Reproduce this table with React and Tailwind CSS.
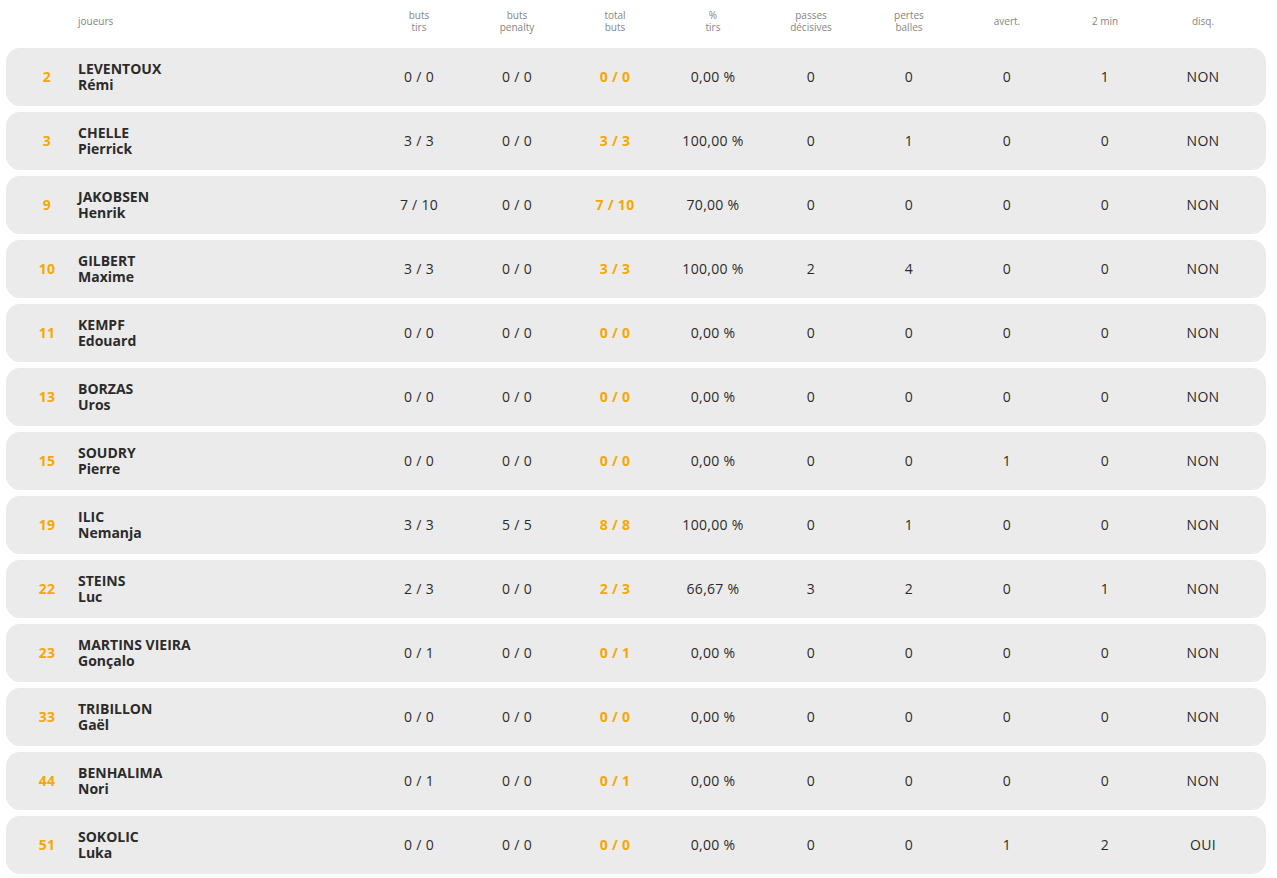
const players = [
  { n: 2, last: 'LEVENTOUX', first: 'Rémi', tirs: '0 / 0', pen: '0 / 0', tot: '0 / 0', pct: '0,00 %', pd: 0, pb: 0, av: 0, dm: 1, dq: 'NON' },
  { n: 3, last: 'CHELLE', first: 'Pierrick', tirs: '3 / 3', pen: '0 / 0', tot: '3 / 3', pct: '100,00 %', pd: 0, pb: 1, av: 0, dm: 0, dq: 'NON' },
  { n: 9, last: 'JAKOBSEN', first: 'Henrik', tirs: '7 / 10', pen: '0 / 0', tot: '7 / 10', pct: '70,00 %', pd: 0, pb: 0, av: 0, dm: 0, dq: 'NON' },
  { n: 10, last: 'GILBERT', first: 'Maxime', tirs: '3 / 3', pen: '0 / 0', tot: '3 / 3', pct: '100,00 %', pd: 2, pb: 4, av: 0, dm: 0, dq: 'NON' },
  { n: 11, last: 'KEMPF', first: 'Edouard', tirs: '0 / 0', pen: '0 / 0', tot: '0 / 0', pct: '0,00 %', pd: 0, pb: 0, av: 0, dm: 0, dq: 'NON' },
  { n: 13, last: 'BORZAS', first: 'Uros', tirs: '0 / 0', pen: '0 / 0', tot: '0 / 0', pct: '0,00 %', pd: 0, pb: 0, av: 0, dm: 0, dq: 'NON' },
  { n: 15, last: 'SOUDRY', first: 'Pierre', tirs: '0 / 0', pen: '0 / 0', tot: '0 / 0', pct: '0,00 %', pd: 0, pb: 0, av: 1, dm: 0, dq: 'NON' },
  { n: 19, last: 'ILIC', first: 'Nemanja', tirs: '3 / 3', pen: '5 / 5', tot: '8 / 8', pct: '100,00 %', pd: 0, pb: 1, av: 0, dm: 0, dq: 'NON' },
  { n: 22, last: 'STEINS', first: 'Luc', tirs: '2 / 3', pen: '0 / 0', tot: '2 / 3', pct: '66,67 %', pd: 3, pb: 2, av: 0, dm: 1, dq: 'NON' },
  { n: 23, last: 'MARTINS VIEIRA', first: 'Gonçalo', tirs: '0 / 1', pen: '0 / 0', tot: '0 / 1', pct: '0,00 %', pd: 0, pb: 0, av: 0, dm: 0, dq: 'NON' },
  { n: 33, last: 'TRIBILLON', first: 'Gaël', tirs: '0 / 0', pen: '0 / 0', tot: '0 / 0', pct: '0,00 %', pd: 0, pb: 0, av: 0, dm: 0, dq: 'NON' },
  { n: 44, last: 'BENHALIMA', first: 'Nori', tirs: '0 / 1', pen: '0 / 0', tot: '0 / 1', pct: '0,00 %', pd: 0, pb: 0, av: 0, dm: 0, dq: 'NON' },
  { n: 51, last: 'SOKOLIC', first: 'Luka', tirs: '0 / 0', pen: '0 / 0', tot: '0 / 0', pct: '0,00 %', pd: 0, pb: 0, av: 1, dm: 2, dq: 'OUI' },
];

const headers = [
  ['buts', 'tirs'],
  ['buts', 'penalty'],
  ['total', 'buts'],
  ['%', 'tirs'],
  ['passes', 'décisives'],
  ['pertes', 'balles'],
  ['avert.'],
  ['2 min'],
  ['disq.'],
];

const grid = 'grid grid-cols-[62px_1fr_repeat(9,98px)] items-center pl-[10px] pr-[14px]';

export default function App() {
  return (
    <div className="bg-white min-h-screen font-['Open_Sans',sans-serif] text-[#2b2b2b]">
      <div className="ml-[6px] w-[1260px] flex flex-col gap-[6px]">
        <div className={`${grid} h-[42px] text-[10px] leading-[12px] text-[#858585]`}>
          <div />
          <div>joueurs</div>
          {headers.map((h, i) => (
            <div key={i} className="text-center">
              {h.map((l) => (
                <div key={l}>{l}</div>
              ))}
            </div>
          ))}
        </div>

        {players.map((p) => (
          <div key={p.n} className={`${grid} h-[58px] bg-[#ebebeb] rounded-[14px] text-[14px] leading-[16px] tracking-[0.3px] font-medium`}>
            <div className="text-center font-bold text-[#f5a800]">{p.n}</div>
            <div className="font-bold tracking-[0px]">
              <div>{p.last}</div>
              <div>{p.first}</div>
            </div>
            <div className="text-center">{p.tirs}</div>
            <div className="text-center">{p.pen}</div>
            <div className="text-center font-bold text-[#f5a800]">{p.tot}</div>
            <div className="text-center">{p.pct}</div>
            <div className="text-center">{p.pd}</div>
            <div className="text-center">{p.pb}</div>
            <div className="text-center">{p.av}</div>
            <div className="text-center">{p.dm}</div>
            <div className="text-center">{p.dq}</div>
          </div>
        ))}
      </div>
    </div>
  );
}
